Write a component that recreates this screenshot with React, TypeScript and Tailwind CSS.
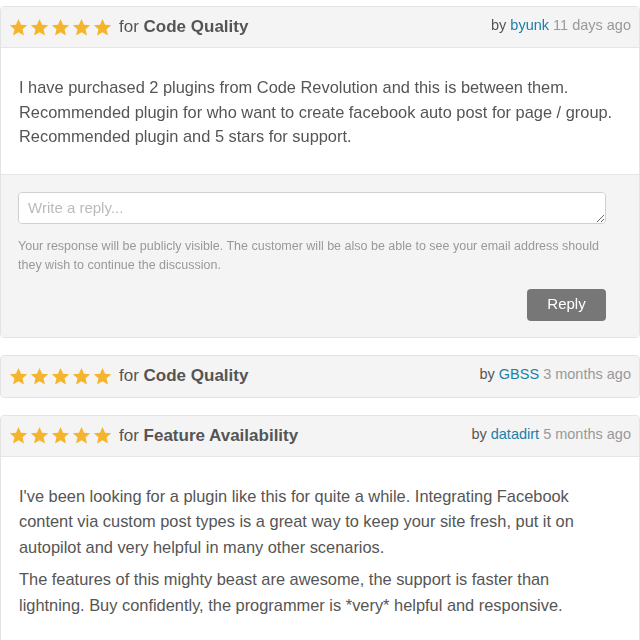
import React from 'react';

const font = { fontFamily: '"Liberation Sans", Arial, sans-serif' };

function Stars() {
  return (
    <div className="flex items-center gap-[2px]">
      {[0, 1, 2, 3, 4].map((i) => (
        <svg key={i} viewBox="0 0 24 24" className="w-[19px] h-[19px]" fill="#f4b52d">
          <path d="M12 1.2l3.2 7.2 7.8.7-5.9 5.2 1.8 7.7L12 18.1 5.1 22l1.8-7.7L1 9.1l7.8-.7z" />
        </svg>
      ))}
    </div>
  );
}

interface HeaderProps {
  category: string;
  author: string;
  when: string;
  bordered?: boolean;
}

function ReviewHeader({ category, author, when, bordered }: HeaderProps) {
  return (
    <div
      className={
        'flex items-center justify-between h-[41px] pl-[8px] pr-[8px] bg-[#f4f4f4] ' +
        (bordered ? 'border-b border-[#e6e6e6]' : '')
      }
    >
      <div className="flex items-center gap-[7px]">
        <Stars />
        <span className="text-[17px] text-[#555]">
          for <b className="font-bold">{category}</b>
        </span>
      </div>
      <span className="text-[14.5px] text-[#555] -mt-[2px]">
        by <span className="text-[#1b7fa6]">{author}</span>{' '}
        <span className="text-[#999]">{when}</span>
      </span>
    </div>
  );
}

export default function App() {
  return (
    <div className="bg-white min-h-[640px] pt-[6px] flex flex-col gap-[17px]" style={font}>
      <div className="border border-[#e3e3e3] rounded-[4px] overflow-hidden">
        <ReviewHeader category="Code Quality" author="byunk" when="11 days ago" bordered />
        <div className="bg-white px-[18px] pt-[27px] pb-[25px] border-b border-[#e6e6e6]">
          <p className="text-[16.4px] leading-[24.5px] text-[#555]">
            I have purchased 2 plugins from Code Revolution and this is between them.
            <br />
            Recommended plugin for who want to create facebook auto post for page / group.
            <br />
            Recommended plugin and 5 stars for support.
          </p>
        </div>
        <div className="bg-[#f4f4f4] pl-[17px] pr-[33px] pt-[17px] pb-[16px]">
          <textarea
            placeholder="Write a reply..."
            className="block w-full h-[32px] bg-white border border-[#cfcfcf] rounded-[4px] px-[9px] py-[4px] text-[15px] text-[#555] placeholder:text-[#bbb] resize-y outline-none"
            style={font}
          />
          <p className="mt-[13px] text-[12.5px] leading-[19px] text-[#999]">
            Your response will be publicly visible. The customer will be also be able to see your email address should
            they wish to continue the discussion.
          </p>
          <div className="flex justify-end mt-[14px]">
            <button className="w-[79px] h-[32px] bg-[#777] text-white text-[15px] rounded-[4px]">Reply</button>
          </div>
        </div>
      </div>

      <div className="border border-[#e3e3e3] rounded-[4px] overflow-hidden">
        <ReviewHeader category="Code Quality" author="GBSS" when="3 months ago" />
      </div>

      <div className="border border-[#e3e3e3] rounded-[4px] overflow-hidden">
        <ReviewHeader category="Feature Availability" author="datadirt" when="5 months ago" bordered />
        <div className="bg-white px-[18px] pt-[27px] pb-[26px]">
          <p className="text-[16.4px] leading-[25.5px] text-[#555]">
            I've been looking for a plugin like this for quite a while. Integrating Facebook
            <br />
            content via custom post types is a great way to keep your site fresh, put it on
            <br />
            autopilot and very helpful in many other scenarios.
          </p>
          <p className="mt-[7px] text-[16.4px] leading-[25.5px] text-[#555]">
            The features of this mighty beast are awesome, the support is faster than
            <br />
            lightning. Buy confidently, the programmer is *very* helpful and responsive.
          </p>
        </div>
      </div>
    </div>
  );
}
